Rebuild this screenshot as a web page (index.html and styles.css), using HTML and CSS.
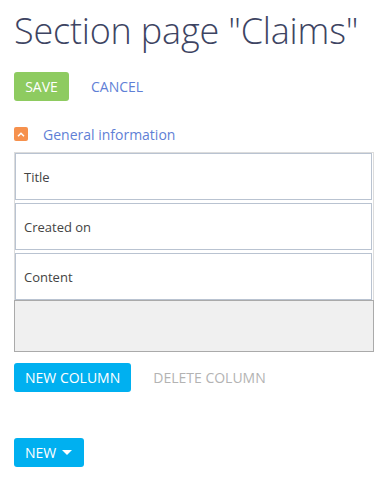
FILE: index.html
```html
<!DOCTYPE html>
<html lang="en">
<head>
	<meta charset="UTF-8">
	<meta name="viewport" content="width=device-width, initial-scale=1.0">
	<title>Section page "Claims"</title>
	<link rel="stylesheet" href="styles.css">
</head>
<body>
	<div class="page">
		<h1 class="head">Section page "Claims"</h1>
		<div class="actions">
			<button class="btn btn-save">SAVE</button>
			<button class="btn btn-link">CANCEL</button>
		</div>
		<div class="group-header">
			<span class="toggle">
				<svg width="8" height="5" viewBox="0 0 8 5"><path d="M1 4.2 L4 1.2 L7 4.2" fill="none" stroke="#fff" stroke-width="1.5"/></svg>
			</span>
			<span class="group-title">General information</span>
		</div>
		<div class="fields">
			<div class="field">Title</div>
			<div class="field">Created on</div>
			<div class="field">Content</div>
		</div>
		<div class="drop-zone"></div>
		<div class="actions columns">
			<button class="btn btn-blue">NEW COLUMN</button>
			<button class="btn btn-link btn-disabled">DELETE COLUMN</button>
		</div>
		<div class="actions">
			<button class="btn btn-blue btn-new">NEW <span class="caret"></span></button>
		</div>
	</div>
</body>
</html>
```

FILE: styles.css
```css
body {
	margin: 0;
	font-family: "Open Sans", sans-serif;
	background: #fff;
}

.page {
	padding: 0 13px 0 14px;
}

.head {
	margin: 0;
	padding-top: 7px;
	font-weight: 300;
	font-size: 36px;
	line-height: 48px;
	color: #3d4462;
	letter-spacing: -0.2px;
}

.actions {
	display: flex;
	align-items: center;
	gap: 22px;
	margin-top: 17px;
}

.btn {
	font-family: "Open Sans", sans-serif;
	font-size: 14px;
	height: 29px;
	padding: 0 11px;
	border: none;
	border-radius: 3px;
	background: none;
	cursor: pointer;
}

.btn-save {
	background-color: #8ecb60;
	color: #fff;
	width: 55px;
	padding: 0;
}

.btn-link {
	color: #5f7fd6;
	padding: 0;
}

.btn-disabled {
	color: #b3b3b3;
}

.btn-blue {
	background-color: #00b0f0;
	color: #fff;
}

.group-header {
	display: flex;
	align-items: center;
	margin-top: 25px;
	height: 16px;
}

.toggle {
	width: 14px;
	height: 14px;
	background-color: #f6914d;
	border-radius: 2px;
	display: flex;
	align-items: center;
	justify-content: center;
}

.group-title {
	margin-left: 15px;
	font-size: 14px;
	color: #5f7fd6;
}

.fields {
	margin-top: 10px;
	border: 1px solid #dcdcdc;
	border-bottom: none;
	display: flex;
	flex-direction: column;
	gap: 3px;
}

.field {
	height: 45px;
	border: 1px solid #b9c3d1;
	font-size: 13px;
	color: #444;
	display: flex;
	align-items: center;
	padding-left: 8px;
	margin-right: 1px;
}

.drop-zone {
	height: 50px;
	border: 1px solid #aaaaaa;
	background-color: #f0f0f0;
}

.columns {
	margin-top: 11px;
}

.actions.columns + .actions {
	margin-top: 46px;
}

.btn-new {
	display: flex;
	align-items: center;
	gap: 6px;
	padding-right: 12px;
}

.caret {
	width: 0;
	height: 0;
	border-left: 5px solid transparent;
	border-right: 5px solid transparent;
	border-top: 5px solid #fff;
}
```
